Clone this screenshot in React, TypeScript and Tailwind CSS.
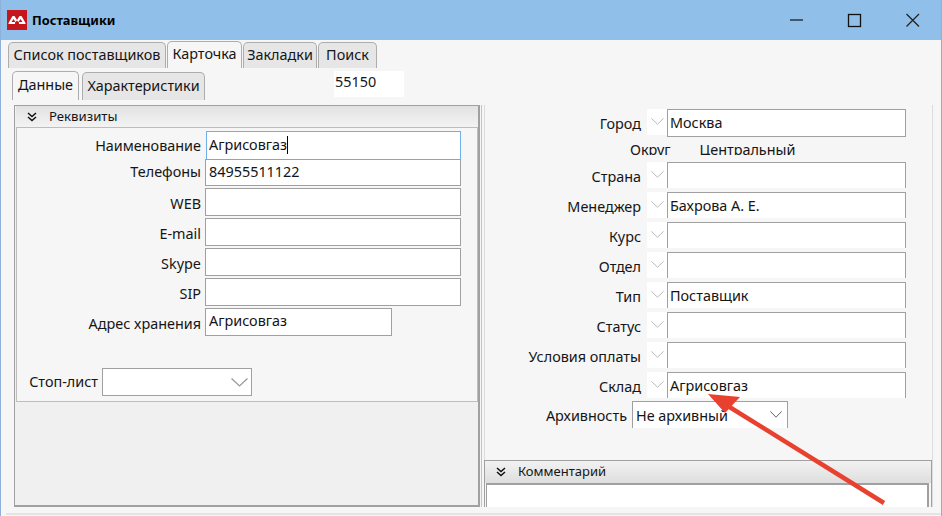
import React from "react";

const Chevron = ({ color = "#9a9a9a", w = 13, h = 7 }: { color?: string; w?: number; h?: number }) => (
  <svg width={w} height={h} viewBox="0 0 16 9" preserveAspectRatio="none" fill="none">
    <path d="M0.5 0.5L8 8L15.5 0.5" stroke={color} strokeWidth="1.2" />
  </svg>
);

const Double = () => (
  <svg width="10" height="10" viewBox="0 0 10 10" fill="none">
    <path d="M1 1L5 4.5L9 1M1 5L5 8.5L9 5" stroke="#111" strokeWidth="1.5" />
  </svg>
);

const Logo = () => (
  <svg width="20" height="20" viewBox="0 0 20 20">
    <rect width="20" height="20" fill="#c5161d" />
    <path
      fillRule="evenodd"
      d="M1.5 13L5.5 6H7.5L10 10L12.5 6H14.5L18.5 13V14H12V12.5L10 10.5L8 12.5V14H1.5ZM6.5 9L4.5 12H8.5ZM13.5 9L11.5 12H15.5Z"
      fill="#fff"
    />
  </svg>
);

const Tab = ({ label, w, active }: { label: string; w: string; active?: boolean }) => (
  <div
    className={`${w} border border-b-0 border-[#adadad] rounded-t-[5px] flex items-center justify-center whitespace-nowrap pb-[2px] ${
      active ? "bg-[#f6f6f6] h-[27px] -mt-[1px]" : "bg-[#e6e6e6] h-[26px]"
    }`}
  >
    {label}
  </div>
);

const LeftRow = ({
  label,
  value,
  cls,
  inputCls,
  labelCls = "pt-[3px]",
}: {
  label: string;
  value?: string;
  cls: string;
  inputCls: string;
  labelCls?: string;
}) => (
  <div className={`flex items-start ${cls}`}>
    <div className={`w-[184px] h-[26px] shrink-0 text-right leading-[26px] ${labelCls}`}>{label}</div>
    <div className={`bg-white border border-[#a0a0a0] pl-[3px] leading-[24px] ${inputCls}`}>{value}</div>
  </div>
);

const RightRow = ({ label, value, full, cls }: { label: string; value?: string; full?: boolean; cls: string }) => (
  <div className={`flex items-start ${cls}`}>
    <div className="w-[156px] h-[26px] shrink-0 text-right leading-[28px] pt-[1px]">{label}</div>
    <div className="ml-[6px] w-[20px] h-[26px] bg-white flex items-start justify-center pt-[9px]">
      <Chevron color="#b5b5b5" />
    </div>
    <div
      className={`w-[239px] border border-[#a0a0a0] bg-white pl-[2px] leading-[26px] ${
        full ? "h-[28px]" : "h-[26px] border-b-0"
      }`}
    >
      {value}
    </div>
  </div>
);

export default function App() {
  return (
    <div
      className="relative w-[942px] h-[516px] overflow-hidden bg-[#f6f6f6] text-[14.4px] text-[#151515] flex flex-col border-l border-r border-[#8fb0dc]"
      style={{ fontFamily: '"Noto Sans", "Open Sans", sans-serif' }}
    >
      <header className="h-[40px] -mx-px bg-[#90c0ea] flex items-center shrink-0">
        <div className="ml-[7px]">
          <Logo />
        </div>
        <div className="ml-[5px] pt-[1px] text-[12.8px] font-bold text-black">Поставщики</div>
        <div className="ml-auto flex items-center">
          <svg width="130" height="16" viewBox="0 0 130 16" fill="none" className="mr-[22px]">
            <path d="M0 8H13" stroke="#111" strokeWidth="1.2" />
            <rect x="58.5" y="2.5" width="12" height="12" stroke="#111" strokeWidth="1.3" />
            <path d="M116.5 2L129 14.5M129 2L116.5 14.5" stroke="#222" strokeWidth="1.3" />
          </svg>
        </div>
      </header>

      <div className="flex items-end pl-[7px] mt-[2px] h-[26px] shrink-0 gap-px">
        <Tab label="Список поставщиков" w="w-[158px]" />
        <Tab label="Карточка" w="w-[75px]" active />
        <Tab label="Закладки" w="w-[74px]" />
        <Tab label="Поиск" w="w-[59px]" />
      </div>

      <div className="flex items-start pl-[11px] mt-[3px] h-[34px] shrink-0">
        <div className="w-[67px] h-[29px] border border-b-0 border-[#adadad] rounded-t-[5px] flex items-center justify-center pb-[3px]">
          Данные
        </div>
        <div className="ml-[3px] mt-[1px] w-[123px] h-[28px] bg-[#e6e6e6] border border-b-0 border-[#adadad] rounded-t-[5px] flex items-center justify-center whitespace-nowrap pb-[1px]">
          Характеристики
        </div>
        <div className="ml-[129px] w-[70px] h-[26px] bg-white pl-[1px] leading-[22px]">55150</div>
      </div>

      <div className="flex flex-1 min-h-0">
        <section className="ml-[13px] w-[466px] h-[402px] border-2 border-[#a0a0a0] border-t-[1px] border-l-[1px] bg-[#f0f0f0] flex flex-col shrink-0">
          <div className="h-[21px] bg-gradient-to-b from-[#e2e2e2] to-[#f3f3f3] flex items-center pl-[11px] shrink-0 ml-px">
            <Double />
            <span className="ml-[12px] pt-[1px] text-[13.2px]">Реквизиты</span>
          </div>
          <div className="h-[275px] ml-px border border-[#bdbdbd] bg-[#f6f6f6] flex flex-col shrink-0">
            <div className="flex items-start mt-[3px]">
              <div className="w-[184px] h-[26px] shrink-0 text-right pt-[2px] leading-[26px]">Наименование</div>
              <div className="ml-[5px] w-[255px] h-[28px] bg-white border border-b-0 border-[#6fb0e6] pl-[2px] leading-[26px] flex items-start">
                Агрисовгаз
                <span className="w-px h-[18px] bg-black mt-[4px]" />
              </div>
            </div>
            <LeftRow label="Телефоны" value="84955511122" cls="" inputCls="w-[256px] ml-[4px] h-[27px]" labelCls="pt-0" />
            <LeftRow label="WEB" cls="mt-[2px]" inputCls="w-[256px] ml-[4px] h-[28px]" />
            <LeftRow label="E-mail" cls="mt-[2px]" inputCls="w-[256px] ml-[4px] h-[28px]" />
            <LeftRow label="Skype" cls="mt-[2px]" inputCls="w-[256px] ml-[4px] h-[28px]" />
            <LeftRow label="SIP" cls="mt-[2px]" inputCls="w-[256px] ml-[4px] h-[28px]" />
            <LeftRow label="Адрес хранения" value="Агрисовгаз" cls="mt-[2px]" inputCls="w-[187px] ml-[4px] h-[28px]" />
            <div className="flex mt-[32px]">
              <div className="w-[81px] text-right whitespace-nowrap leading-[26px] pt-[1px]">Стоп-лист</div>
              <div className="ml-[4px] w-[150px] h-[28px] bg-white border border-[#a0a0a0] flex items-center justify-end pr-[3px]">
                <Chevron w={17} h={9} />
              </div>
            </div>
          </div>
        </section>

        <div className="ml-[1px] w-[1px] h-[402px] bg-[#c4c4c4] shrink-0" />

        <section className="relative ml-[2px] w-[449px] h-[402px] border-x border-[#dcdcdc] shrink-0 flex flex-col">
          <RightRow label="Город" value="Москва" full cls="mt-[4px]" />
          <div className="flex h-[18px] leading-[25px] overflow-hidden shrink-0">
            <div className="ml-[145px]">Округ</div>
            <div className="ml-[29px]">Центральный</div>
          </div>
          <RightRow label="Страна" cls="mt-[7px]" />
          <RightRow label="Менеджер" value="Бахрова А. Е." cls="mt-[4px]" />
          <RightRow label="Курс" cls="mt-[4px]" />
          <RightRow label="Отдел" cls="mt-[4px]" />
          <RightRow label="Тип" value="Поставщик" cls="mt-[4px]" />
          <RightRow label="Статус" cls="mt-[4px]" />
          <RightRow label="Условия оплаты" cls="mt-[4px]" />
          <RightRow label="Склад" value="Агрисовгаз" cls="mt-[4px]" />
          <div className="flex mt-[3px]">
            <div className="w-[142px] text-right leading-[26px] pt-[2px]">Архивность</div>
            <div className="ml-[5px] w-[156px] h-[27px] bg-white border border-b-0 border-[#a0a0a0] pl-[3px] leading-[28px] flex items-start justify-between pr-[5px]">
              Не архивный
              <span className="mt-[9px] flex">
                <Chevron color="#555" w={12} h={7} />
              </span>
            </div>
          </div>
          <div className="mt-[31px] -ml-px w-[448px] h-[48px] border border-b-0 border-[#a0a0a0] flex flex-col">
            <div className="h-[22px] bg-gradient-to-b from-[#f2f2f2] to-[#dedede] flex items-center pl-[11px] shrink-0">
              <Double />
              <span className="ml-[12px] text-[13px]">Комментарий</span>
            </div>
            <div className="flex-1 ml-px mr-[2px] border-2 border-b-0 border-[#a0a0a0] border-l-[1px] bg-white" />
          </div>
        </section>
      </div>

      <div className="h-[2px] -mx-px ml-[5px] bg-[#e4e4e4] mb-px shrink-0" />

      <svg className="absolute left-0 top-0 pointer-events-none" width="942" height="516" viewBox="0 0 942 516" fill="none">
        <path d="M883 503L722 403" stroke="#e8412f" strokeWidth="4.5" />
        <path d="M707 394L739 397L724 413Z" fill="#e8412f" />
      </svg>
    </div>
  );
}
